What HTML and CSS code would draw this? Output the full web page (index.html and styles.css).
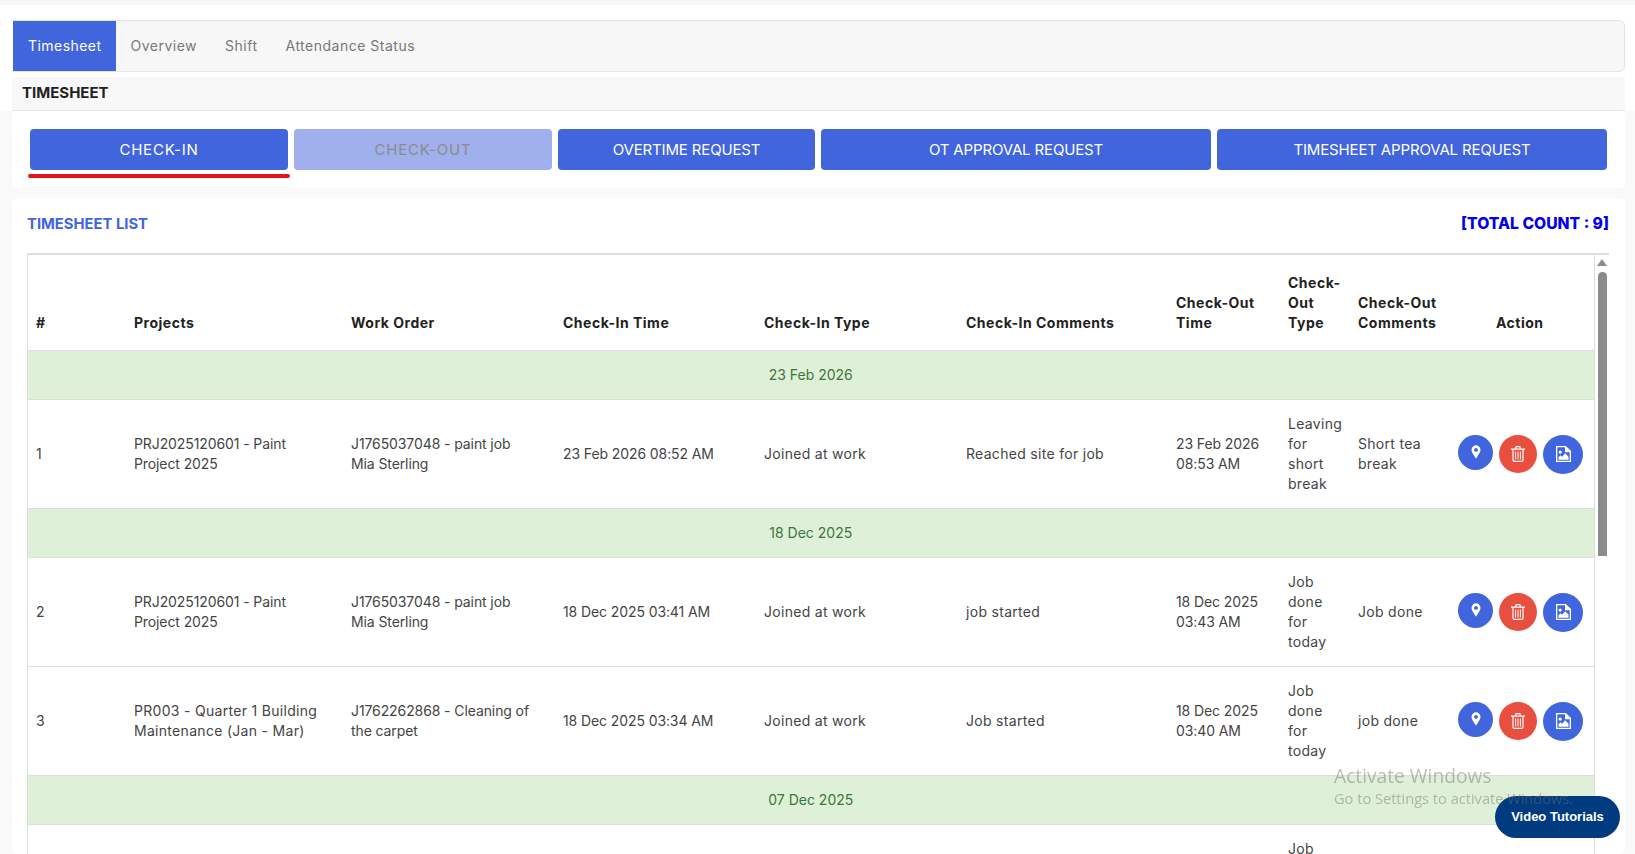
FILE: index.html
```html
<!DOCTYPE html>
<html lang="en">
<head>
<meta charset="utf-8">
<title>Timesheet</title>
<link rel="stylesheet" href="styles.css">
</head>
<body>
<svg class="sprite" aria-hidden="true">
  <symbol id="i-pin" viewBox="0 0 12 16"><path fill="#fff" fill-rule="evenodd" d="M6 0a5.400 5.400 0 0 0-5.400 5.400C.6 8.600 4.400 13.400 6 16c1.600-2.600 5.400-7.400 5.400-10.600A5.400 5.400 0 0 0 6 0zm0 3.200a2.300 2.300 0 1 1 0 4.600 2.300 2.300 0 0 1 0-4.600z"/></symbol>
  <symbol id="i-trash" viewBox="0 0 14 16"><path fill="none" stroke="#fff" stroke-width="1.200" d="M0 3.200h14M4.800 3V1.200a.6.600 0 0 1 .6-.6h3.200a.6.600 0 0 1 .6.600V3M2 3.200V14a1.400 1.400 0 0 0 1.400 1.400h7.200A1.400 1.400 0 0 0 12 14V3.200"/><path stroke="#fff" stroke-width="1" d="M4.600 5.500v8M7 5.500v8M9.400 5.500v8"/></symbol>
  <symbol id="i-image" viewBox="0 0 15 16"><path fill="none" stroke="#fff" stroke-width="1.300" d="M.65.65h8.700l5 4.700v10H.65z"/><path fill="#fff" d="M9 .6h1l5 4.700v1H9zM4.200 4.500a1.600 1.600 0 1 1 0 3.200 1.600 1.600 0 0 1 0-3.200zM2.500 13.800v-2.600l2-2 1.500 1.500 3.200-3.400 3.300 3.400v3.100z"/></symbol>
</svg>
<div class="top-strip"></div>
<main class="page">
  <div class="head-block">
    <nav class="tabs">
      <a class="tab active">Timesheet</a>
      <a class="tab">Overview</a>
      <a class="tab">Shift</a>
      <a class="tab">Attendance Status</a>
    </nav>
    <h1 class="page-title">TIMESHEET</h1>
  </div>
  <div class="content">
    <section class="card actions">
      <div class="action-slot current"><button class="btn spaced">CHECK-IN</button></div>
      <div class="action-slot"><button class="btn spaced disabled">CHECK-OUT</button></div>
      <div class="action-slot"><button class="btn">OVERTIME REQUEST</button></div>
      <div class="action-slot"><button class="btn">OT APPROVAL REQUEST</button></div>
      <div class="action-slot"><button class="btn">TIMESHEET APPROVAL REQUEST</button></div>
    </section>
    <section class="card list">
      <header class="list-head">
        <h2 class="list-title">TIMESHEET LIST</h2>
        <span class="total">[TOTAL COUNT : 9]</span>
      </header>
      <div class="table-wrap">
        <table class="grid">
          <colgroup>
            <col class="c-num"><col class="c-proj"><col class="c-wo"><col class="c-cit"><col class="c-ctype"><col class="c-ccom"><col class="c-cot"><col class="c-otype"><col class="c-ocom"><col class="c-act">
          </colgroup>
          <thead>
            <tr>
              <th>#</th><th>Projects</th><th>Work Order</th><th>Check-In Time</th><th>Check-In Type</th><th>Check-In Comments</th><th>Check-Out Time</th><th>Check-Out Type</th><th>Check-Out Comments</th><th class="center">Action</th>
            </tr>
          </thead>
          <tbody>
            <tr class="group"><td colspan="10">23 Feb 2026</td></tr>
            <tr>
              <td>1</td><td class="id">PRJ2025120601 - Paint Project 2025</td><td class="id">J1765037048 - paint job<br>Mia Sterling</td><td class="id">23 Feb 2026 08:52 AM</td><td>Joined at work</td><td>Reached site for job</td><td class="id">23 Feb 2026 08:53 AM</td><td>Leaving for short break</td><td>Short tea break</td>
              <td><div class="row-actions">
                <button class="ico pin"><svg width="10" height="14"><use href="#i-pin"/></svg></button>
                <button class="ico del"><svg width="14" height="16"><use href="#i-trash"/></svg></button>
                <button class="ico img"><svg width="15" height="16"><use href="#i-image"/></svg></button>
              </div></td>
            </tr>
            <tr class="group"><td colspan="10">18 Dec 2025</td></tr>
            <tr>
              <td>2</td><td class="id">PRJ2025120601 - Paint Project 2025</td><td class="id">J1765037048 - paint job<br>Mia Sterling</td><td class="id">18 Dec 2025 03:41 AM</td><td>Joined at work</td><td>job started</td><td class="id">18 Dec 2025 03:43 AM</td><td>Job done for today</td><td>Job done</td>
              <td><div class="row-actions">
                <button class="ico pin"><svg width="10" height="14"><use href="#i-pin"/></svg></button>
                <button class="ico del"><svg width="14" height="16"><use href="#i-trash"/></svg></button>
                <button class="ico img"><svg width="15" height="16"><use href="#i-image"/></svg></button>
              </div></td>
            </tr>
            <tr>
              <td>3</td><td>PR003 - Quarter 1 Building Maintenance (Jan - Mar)</td><td class="id">J1762262868 - Cleaning of the carpet</td><td class="id">18 Dec 2025 03:34 AM</td><td>Joined at work</td><td>Job started</td><td class="id">18 Dec 2025 03:40 AM</td><td>Job done for today</td><td>job done</td>
              <td><div class="row-actions">
                <button class="ico pin"><svg width="10" height="14"><use href="#i-pin"/></svg></button>
                <button class="ico del"><svg width="14" height="16"><use href="#i-trash"/></svg></button>
                <button class="ico img"><svg width="15" height="16"><use href="#i-image"/></svg></button>
              </div></td>
            </tr>
            <tr class="group"><td colspan="10">07 Dec 2025</td></tr>
            <tr class="last">
              <td></td><td></td><td></td><td></td><td></td><td></td><td></td><td>Job</td><td></td><td></td>
            </tr>
          </tbody>
        </table>
        <div class="scrollbar"><span class="arrow"></span><span class="thumb"></span></div>
      </div>
    </section>
  </div>
</main>
<button class="video">Video Tutorials</button>
<div class="watermark">
  <div class="wm-title">Activate Windows</div>
  <div class="wm-sub">Go to Settings to activate Windows.</div>
</div>
</body>
</html>
```
FILE: styles.css
```css
* { box-sizing: border-box; }
html, body { margin: 0; height: 854px; overflow: hidden; }
body { background: #fff; font-family: Inter, "Noto Sans", sans-serif; font-size: 14px; color: #444; }
.sprite { display: none; }
.top-strip { height: 5px; background: #f7f7f7; }
.page { height: 849px; overflow: hidden; display: flex; flex-direction: column; }
.head-block { flex: none; padding: 15px 10px 0 12px; }
.tabs { display: flex; height: 52px; margin-left: 1px; background: #f7f7f7; border: 1px solid #e4e4e4; border-left: 0; border-radius: 0 6px 6px 0; }
.tab { display: flex; align-items: center; padding: 0 14px 1px; color: #777; font-size: 14px; letter-spacing: .5px; }
.tab.active { padding: 0 15px 1px; background: #4065dd; color: #fff; letter-spacing: .45px; }
.page-title { margin: 5px 0 0; height: 34px; padding: 0 10px 2px; display: flex; align-items: center; background: #f8f8f8; border-bottom: 1px solid #e8e8ee; font-size: 15px; font-weight: 700; color: #222; }
.content { flex: 1; min-height: 0; padding: 0 10px 0 12px; background: #f9f9f9; display: flex; flex-direction: column; }
.card { background: #fff; border-radius: 5px; }
.actions { flex: none; height: 77px; padding: 18px 18px 0; display: grid; grid-template-columns: 258fr 258fr 257fr 390fr 390fr; gap: 6px; }
.action-slot { position: relative; height: 41px; }
.btn { display: block; width: 100%; height: 41px; border: 0; border-radius: 4px; background: #4065dd; color: #fff; font: 400 15px Inter, sans-serif; letter-spacing: -.15px; }
.btn.spaced { letter-spacing: .8px; }
.btn.disabled { background: #9fb0ec; color: #8b8b8b; }
.current::after { content: ""; position: absolute; left: -2px; right: -2px; top: 45px; height: 4px; border-radius: 2px; background: #e8141c; }
.list { margin-top: 10px; flex: 1; min-height: 0; overflow: hidden; padding: 0 16px 0 15px; }
.list-head { height: 55px; display: flex; align-items: center; justify-content: space-between; padding-bottom: 4px; }
.list-title { margin: 0; font-size: 14.800px; font-weight: 700; color: #4065dd; }
.total { font-size: 15.700px; font-weight: 800; color: #0000ee; }
.table-wrap { display: flex; align-items: stretch; border-top: 2px solid #ddd; border-left: 1px solid #ddd; }
.grid { width: 1566px; flex: none; table-layout: fixed; border-collapse: collapse; border-right: 1px solid #ddd; letter-spacing: .3px; }
.c-num { width: 98px; } .c-proj { width: 217px; } .c-wo { width: 212px; } .c-cit { width: 201px; } .c-ctype { width: 202px; } .c-ccom { width: 210px; } .c-cot { width: 112px; } .c-otype { width: 70px; } .c-ocom { width: 100px; } .c-act { width: 144px; }
.grid th { padding: 8px 8px 17px; height: 95px; vertical-align: bottom; text-align: left; font-weight: 700; line-height: 20px; color: #222; letter-spacing: .5px; border-bottom: 1px solid #ddd; }
.grid th.center { text-align: center; padding-right: 12px; }
.grid td { padding: 14px 8px; height: 108px; line-height: 20px; vertical-align: middle; border-bottom: 1px solid #ddd; }
.grid td.id { letter-spacing: -.1px; }
.grid .group td { height: 49px; padding: 0; text-align: center; background: #dff0d8; color: #3c763d; letter-spacing: 0; }
.grid .last td { vertical-align: top; }
.row-actions { display: flex; align-items: flex-start; gap: 6px; padding-top: 1px; }
.ico { display: flex; align-items: center; justify-content: center; padding: 0; border: 0; border-radius: 50%; }
.ico svg { display: block; }
.pin { width: 35px; height: 35px; background: #4065dd; }
.del { width: 38px; height: 38px; background: #e94f3e; }
.img { width: 40px; height: 39px; background: #4065dd; }
.scrollbar { width: 15px; flex: none; display: flex; flex-direction: column; align-items: center; padding-top: 4px; }
.arrow { width: 0; height: 0; border-left: 5px solid transparent; border-right: 5px solid transparent; border-bottom: 7px solid #8c8c8c; }
.thumb { margin-top: 6px; width: 9px; height: 284px; border-radius: 5px 5px 0 0; background: #8c8c8c; }
.watermark { position: fixed; left: 1334px; top: 762px; color: rgba(110,110,110,.45); font-family: "Open Sans", sans-serif; pointer-events: none; }
.wm-title { font-size: 19.200px; line-height: 27px; }
.wm-sub { font-size: 14.600px; line-height: 19px; }
.video { position: fixed; left: 1495px; top: 796px; width: 125px; height: 42px; padding: 0 0 2px; border: 0; border-radius: 21px; background: #003b7f; color: #fff; font: 700 13px "Liberation Sans", sans-serif; }
```
